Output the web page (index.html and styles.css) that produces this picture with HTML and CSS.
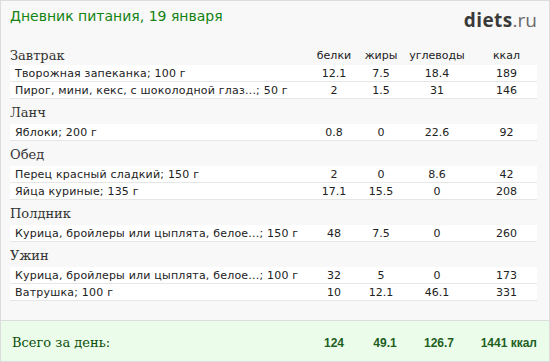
FILE: index.html
```html
<!DOCTYPE html>
<html lang="ru">
<head>
<meta charset="utf-8">
<title>Дневник питания</title>
<link rel="stylesheet" href="styles.css">
</head>
<body>
<div class="card">
  <header class="top">
    <div class="title">Дневник питания, 19 января</div>
    <div class="logo"><span class="logo-main">diets</span><span class="logo-tld">.ru</span></div>
  </header>

  <section class="sec">
    <div class="sec-head first">
      <span class="sec-name">Завтрак</span>
      <span class="lbl">белки</span>
      <span class="lbl">жиры</span>
      <span class="lbl">углеводы</span>
      <span class="lbl kcal">ккал</span>
    </div>
    <div class="row"><span class="name">Творожная запеканка; 100 г</span><span>12.1</span><span>7.5</span><span>18.4</span><span class="kcal">189</span></div>
    <div class="row"><span class="name">Пирог, мини, кекс, с шоколодной глаз...; 50 г</span><span>2</span><span>1.5</span><span>31</span><span class="kcal">146</span></div>
  </section>

  <section class="sec">
    <div class="sec-head"><span class="sec-name">Ланч</span></div>
    <div class="row"><span class="name">Яблоки; 200 г</span><span>0.8</span><span>0</span><span>22.6</span><span class="kcal">92</span></div>
  </section>

  <section class="sec">
    <div class="sec-head"><span class="sec-name">Обед</span></div>
    <div class="row"><span class="name">Перец красный сладкий; 150 г</span><span>2</span><span>0</span><span>8.6</span><span class="kcal">42</span></div>
    <div class="row"><span class="name">Яйца куриные; 135 г</span><span>17.1</span><span>15.5</span><span>0</span><span class="kcal">208</span></div>
  </section>

  <section class="sec">
    <div class="sec-head"><span class="sec-name">Полдник</span></div>
    <div class="row"><span class="name">Курица, бройлеры или цыплята, белое...; 150 г</span><span>48</span><span>7.5</span><span>0</span><span class="kcal">260</span></div>
  </section>

  <section class="sec">
    <div class="sec-head"><span class="sec-name">Ужин</span></div>
    <div class="row"><span class="name">Курица, бройлеры или цыплята, белое...; 100 г</span><span>32</span><span>5</span><span>0</span><span class="kcal">173</span></div>
    <div class="row"><span class="name">Ватрушка; 100 г</span><span>10</span><span>12.1</span><span>46.1</span><span class="kcal">331</span></div>
  </section>

  <footer class="total">
    <span class="total-name">Всего за день:</span>
    <span class="tv">124</span>
    <span class="tv fat">49.1</span>
    <span class="tv carb">126.7</span>
    <span class="tv sum">1441 ккал</span>
  </footer>
</div>
</body>
</html>
```

FILE: styles.css
```css
* { box-sizing: border-box; }

html, body {
  margin: 0;
  padding: 0;
  background: #f8f8f8;
}

.card {
  width: 550px;
  height: 362px;
  border: 1px solid #dcdcdc;
  background: #f8f8f8;
  display: flex;
  flex-direction: column;
  overflow: hidden;
}

.top {
  height: 39px;
  display: flex;
  justify-content: space-between;
  align-items: flex-start;
  padding: 7px 12px 0 9px;
}

.title {
  font-family: "DejaVu Sans", Verdana, sans-serif;
  font-size: 14px;
  line-height: 17px;
  color: #138313;
}

.logo {
  font-family: "Open Sans", sans-serif;
  font-size: 19px;
  line-height: 22px;
  margin-top: 1px;
}

.logo-main {
  font-weight: 700;
  color: #3a3a3a;
  letter-spacing: 0.4px;
}

.logo-tld {
  font-weight: 400;
  color: #6a6a6a;
}

.sec {
  padding: 0 12px 0 9px;
}

.sec-head,
.row,
.total {
  display: grid;
  grid-template-columns: 1fr 48px 46px 66px 67px;
}

.sec-head {
  height: 25px;
  padding-top: 6px;
}

.sec-head.first {
  padding-top: 8px;
}

.sec-name {
  font-family: "DejaVu Serif", Georgia, serif;
  font-size: 13px;
  line-height: 16px;
  color: #333;
}

.lbl {
  font-family: "DejaVu Sans", Verdana, sans-serif;
  font-size: 11px;
  line-height: 16px;
  color: #222;
  text-align: center;
}

.row {
  height: 17px;
  padding-top: 1px;
  background: #fff;
  border-bottom: 1px solid #e6e6e6;
  font-family: "DejaVu Sans", Verdana, sans-serif;
  font-size: 11px;
  line-height: 15px;
  color: #222;
}

.row span {
  text-align: center;
  white-space: nowrap;
}

.row .name {
  text-align: left;
  padding-left: 5px;
  overflow: hidden;
  letter-spacing: 0.2px;
}

.kcal {
  padding-left: 6px;
}

.total {
  margin-top: auto;
  height: 41px;
  border-top: 1px solid #dcdcdc;
  background: #ebfdea;
  padding: 0 12px 0 11px;
  align-items: end;
  padding-bottom: 10px;
}

.total-name {
  font-family: "DejaVu Serif", Georgia, serif;
  font-size: 13px;
  line-height: 17px;
  color: #0b4f0b;
}

.tv {
  font-family: "Liberation Sans", Arial, sans-serif;
  font-weight: 700;
  font-size: 12px;
  line-height: 15px;
  color: #1f5f1f;
  text-align: center;
  white-space: nowrap;
}

.tv.fat { padding-left: 8px; }
.tv.carb { padding-left: 4px; }
.tv.sum { text-align: right; }
```
